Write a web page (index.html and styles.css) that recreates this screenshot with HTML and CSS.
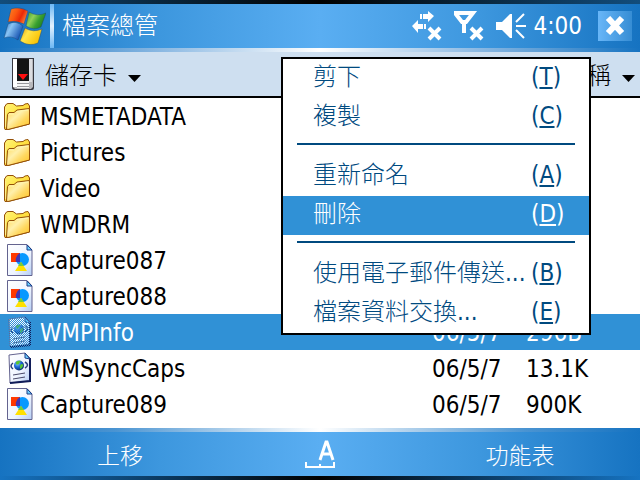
FILE: index.html
```html
<!DOCTYPE html>
<html lang="zh-Hant">
<head>
<meta charset="utf-8">
<title>檔案總管</title>
<link rel="stylesheet" href="styles.css">
</head>
<body>
<svg class="defs" aria-hidden="true">
  <defs>
    <linearGradient id="gold" x1="0" y1="0" x2="1" y2="1"><stop offset="0" stop-color="#fff27c"/><stop offset=".35" stop-color="#ffe84c"/><stop offset="1" stop-color="#ffb818"/></linearGradient>
    <linearGradient id="goldfront" x1="0" y1="0" x2="1" y2="1"><stop offset="0" stop-color="#ffd850"/><stop offset=".4" stop-color="#fff0ac"/><stop offset=".65" stop-color="#ffd860"/><stop offset="1" stop-color="#ffc020"/></linearGradient>
    <linearGradient id="paper" x1="0" y1="0" x2="1" y2="1"><stop offset="0" stop-color="#fff"/><stop offset=".6" stop-color="#eef4ff"/><stop offset="1" stop-color="#b4cdf4"/></linearGradient>
    <radialGradient id="globe" cx=".35" cy=".3" r=".8"><stop offset="0" stop-color="#8cc8ff"/><stop offset=".45" stop-color="#1c68d8"/><stop offset="1" stop-color="#04205c"/></radialGradient>
    <pattern id="dither" width="2" height="2" patternUnits="userSpaceOnUse"><path d="M0 0h1v1h-1zM1 1h1v1h-1z" fill="#3091d6"/></pattern>
    <symbol id="folder" viewBox="0 0 28 28">
      <path d="M1.500 5L3.500 2L5 1.500H10L13.500 4L20 3.500L22 2L25 1.500L26.500 4V22L5 27.500H2L1.500 26Z" fill="url(#gold)" stroke="#945008"/>
      <path d="M4.500 12.500L6 10.500H11L14 8L26.500 6.500V22L5 27.500L3.500 27Z" fill="url(#goldfront)" stroke="#945008"/>
      <path d="M2.500 7V25" stroke="#fff08c"/>
      <path d="M14 9.500L25 8M6 12H11" stroke="#fff6b0"/>
    </symbol>
    <symbol id="picture" viewBox="0 0 26 32">
      <path d="M.5.5H20L25 6V31.500H.5Z" fill="url(#paper)" stroke="#63638f"/>
      <path d="M20 1V6H25Z" fill="#6dd2ff" stroke="#1c3c88"/>
      <circle cx="15.500" cy="15.500" r="6.500" fill="#0898ff"/>
      <rect x="4" y="9" width="9" height="9" fill="#ff3800"/>
      <path d="M10 12C11 10 12 10 13 9V18H9Q8 15 10 12Z" fill="#4036b4"/>
      <path d="M14 18L20 27H8Z" fill="#ffe000"/>
      <path d="M14 18L17 22H11Z" fill="#78cc38"/>
    </symbol>
    <symbol id="webfile" viewBox="0 0 24 32">
      <path d="M1 3L17 1L22 6V29L2 31Z" fill="url(#paper)" stroke="#63638f"/>
      <path d="M22 6V29L2 31" fill="none" stroke="#101c58" stroke-width="2"/>
      <path d="M17 1V6L22 7Z" fill="#6dd2ff" stroke="#1c3c88"/>
      <path d="M5 11Q1 14 5 17M17 10Q22 13 17 16" fill="none" stroke="#283c78" stroke-width="1.500"/>
      <circle cx="11" cy="13.500" r="5" fill="url(#globe)"/>
      <path d="M8 10Q10 8 13 9Q11 11 11 12Q9 13 8 12ZM13 12Q16 12 15 14Q14 17 12 17Q11 14 13 12Z" fill="#58c434"/>
      <path d="M5 23L17 21M5 27L17 25" stroke="#484868" stroke-width="1"/>
    </symbol>
    <symbol id="cross" viewBox="0 0 15 15"><path d="M2 2L13 13M13 2L2 13" stroke="#fff" stroke-width="4"/></symbol>
  </defs>
</svg>
<div class="device">
  <header class="titlebar">
    <button class="start" aria-label="開始">
      <svg width="46" height="44" viewBox="0 4 46 44">
        <defs>
          <linearGradient id="fr" x1="0" y1="0" x2="1" y2=".4"><stop offset="0" stop-color="#f88828"/><stop offset=".45" stop-color="#fc5810"/><stop offset=".75" stop-color="#e82808"/><stop offset="1" stop-color="#f87830"/></linearGradient>
          <linearGradient id="fg" x1="0" y1="0" x2="1" y2=".5"><stop offset="0" stop-color="#309828"/><stop offset=".4" stop-color="#90d058"/><stop offset=".7" stop-color="#38a030"/><stop offset="1" stop-color="#207c20"/></linearGradient>
          <linearGradient id="fb" x1="0" y1="0" x2="1" y2=".5"><stop offset="0" stop-color="#2868b8"/><stop offset=".4" stop-color="#88c4f4"/><stop offset="1" stop-color="#1450b0"/></linearGradient>
          <linearGradient id="fy" x1="0" y1="0" x2="1" y2=".5"><stop offset="0" stop-color="#d89808"/><stop offset=".4" stop-color="#ffe448"/><stop offset="1" stop-color="#f8c000"/></linearGradient>
        </defs>
        <g stroke="#184878" stroke-opacity=".45" stroke-width="1">
          <path d="M11 9Q19 6 28 11L24 24Q16 20 8 22Z" fill="url(#fr)"/>
          <path d="M29 12Q37 17 46 13L41 27Q34 31 26 26Z" fill="url(#fg)"/>
          <path d="M8 24Q16 20 23 26L18 40Q11 35 4 38Z" fill="url(#fb)"/>
          <path d="M25 28Q33 33 42 29L38 43Q29 47 20 41Z" fill="url(#fy)"/>
        </g>
      </svg>
    </button>
    <span class="divider"></span>
    <h1 class="title">檔案總管</h1>
    <div class="status">
      <button aria-label="連線"><svg width="30" height="31" viewBox="0 0 30 31"><path d="M8 3h2v5h-2zM11 3h5V0L22 5L16 11V8H11zM12 13h2v5h-2zM0 15L6 9V13H11V18H6V22Z" fill="#fff"/><use href="#cross" x="15" y="15" width="15" height="15"/></svg></button>
      <button aria-label="訊號"><svg width="30" height="31" viewBox="0 0 30 31"><path d="M1 2H19L12 11H8ZM10 10V22" fill="none" stroke="#fff" stroke-width="4"/><use href="#cross" x="15" y="15" width="15" height="15"/></svg></button>
      <button aria-label="音量"><svg width="30" height="31" viewBox="0 0 30 31"><path d="M0 11H6L14 3H16V27H14L6 19H0Z" fill="#fff"/><path d="M20 11L28 3M20 15H30M20 19L28 27" stroke="#fff" stroke-width="2"/></svg></button>
      <time class="clock">4:00</time>
      <button class="close" aria-label="關閉"><svg width="20" height="20" viewBox="0 0 20 20"><path d="M3 2L17 17M17 2L3 17" stroke="#fff" stroke-width="6"/></svg></button>
    </div>
  </header>

  <nav class="toolbar">
    <button class="picker">
      <svg width="22" height="32" viewBox="0 0 22 32">
        <path d="M0 0H22V30Q22 32 20 32H2Q0 32 0 30Z" fill="#383840"/>
        <path d="M1 1H21V29L19 31H3L1 29Z" fill="#b8b8bc"/>
        <path d="M1 1H5V29H1Z" fill="#fff"/><path d="M17 1H20V24H17Z" fill="#dcdce0"/>
        <path d="M5 1H17V23H5Z" fill="#141414"/><path d="M6 16H16L11 22Z" fill="#ff1010"/>
        <path d="M5 23H17V30H5Z" fill="#f4f4f4"/>
        <path d="M5 25.500H17M5 28.500H17" stroke="#98989c"/>
      </svg>
      <span>儲存卡</span>
      <svg class="arrow" width="13" height="7" viewBox="0 0 13 7"><path d="M0 0H13L6.500 7Z"/></svg>
    </button>
    <button class="sorter">
      <span>名稱</span>
      <svg class="arrow" width="13" height="7" viewBox="0 0 13 7"><path d="M0 0H13L6.500 7Z"/></svg>
    </button>
  </nav>

  <main class="content">
    <table class="files">
      <tbody>
        <tr><td class="icon"><svg width="28" height="28"><use href="#folder"/></svg></td><td>MSMETADATA</td><td class="date"></td><td class="size"></td></tr>
        <tr><td class="icon"><svg width="28" height="28"><use href="#folder"/></svg></td><td>Pictures</td><td></td><td></td></tr>
        <tr><td class="icon"><svg width="28" height="28"><use href="#folder"/></svg></td><td>Video</td><td></td><td></td></tr>
        <tr><td class="icon"><svg width="28" height="28"><use href="#folder"/></svg></td><td>WMDRM</td><td></td><td></td></tr>
        <tr><td class="icon file"><svg width="26" height="32"><use href="#picture"/></svg></td><td>Capture087</td><td></td><td></td></tr>
        <tr><td class="icon file"><svg width="26" height="32"><use href="#picture"/></svg></td><td>Capture088</td><td></td><td></td></tr>
        <tr class="selected"><td class="icon file"><svg width="26" height="32"><use href="#webfile" x="1" width="24" height="32"/><path d="M2 0H25V32H2Z" fill="url(#dither)"/></svg></td><td>WMPInfo</td><td>06/5/7</td><td>296B</td></tr>
        <tr><td class="icon file"><svg width="26" height="32"><use href="#webfile" x="1" width="24" height="32"/></svg></td><td>WMSyncCaps</td><td>06/5/7</td><td>13.1K</td></tr>
        <tr><td class="icon file"><svg width="26" height="32"><use href="#picture"/></svg></td><td>Capture089</td><td>06/5/7</td><td>900K</td></tr>
      </tbody>
    </table>
  </main>

  <div class="menu" role="menu">
    <button role="menuitem"><span>剪下</span><span class="key">(<u>T</u>)</span></button>
    <button role="menuitem"><span>複製</span><span class="key">(<u>C</u>)</span></button>
    <hr>
    <button role="menuitem"><span>重新命名</span><span class="key">(<u>A</u>)</span></button>
    <button role="menuitem" class="active"><span>刪除</span><span class="key">(<u>D</u>)</span></button>
    <hr>
    <button role="menuitem"><span>使用電子郵件傳送...</span><span class="key">(<u>B</u>)</span></button>
    <button role="menuitem"><span>檔案資料交換...</span><span class="key">(<u>E</u>)</span></button>
  </div>

  <footer class="softkeys">
    <button>上移</button>
    <button class="sip" aria-label="輸入面板"><svg width="30" height="29" viewBox="0 0 30 29"><path d="M15 20L21 2H22L28 20M17 14H26" fill="none" stroke="#fff" stroke-width="3"/><path d="M1 22V27H29V22M15 24V27" fill="none" stroke="#fff" stroke-width="2"/></svg></button>
    <button>功能表</button>
  </footer>
</div>
</body>
</html>
```
FILE: styles.css
```css
* { box-sizing: border-box; }

body {
  margin: 0;
  font: 24px/36px "DejaVu Sans Condensed", "Noto Sans CJK TC", sans-serif;
  font-weight: 300;
  color: #000;
  background: #fff;
}

button {
  display: flex;
  align-items: center;
  margin: 0;
  padding: 0;
  border: 0;
  background: none;
  color: inherit;
  font: inherit;
  white-space: nowrap;
}

svg { display: block; flex: none; }
.defs { position: absolute; width: 0; height: 0; }

.device {
  position: relative;
  display: flex;
  flex-direction: column;
  min-height: 100vh;
}

.titlebar,
.softkeys {
  color: #fff;
  border-style: solid;
  border-width: 4px 0;
  border-color: transparent;
}

.titlebar {
  display: flex;
  align-items: center;
  height: 52px;
  background:
    linear-gradient(90deg, #1673c1, #8ab8e2 25%, #fff 50%, #8ab8e2 75%, #1673c1) bottom / 100% 4px no-repeat border-box,
    linear-gradient(90deg, #124d7c, #000 50%, #124d7c) top / 100% 4px no-repeat border-box,
    linear-gradient(90deg, #1673c1, #3d97de 25%, #5aaef2 50%, #3d97de 75%, #1673c1) border-box;
}

.divider {
  width: 4px;
  height: 44px;
  margin: 0 8px 0 4px;
  background: linear-gradient(#6db8f4, #e4f2fe 50%, #6db8f4);
}

.title { margin: 0; font: inherit; }
.status { display: flex; align-items: center; gap: 12px; margin-left: auto; padding-right: 8px; }
.clock { margin-left: -4px; }

.close {
  justify-content: center;
  width: 34px;
  height: 30px;
  margin-left: 4px;
  background: linear-gradient(90deg, #68b6f8, #368dd4);
}

.toolbar {
  display: flex;
  justify-content: space-between;
  height: 46px;
  padding: 0 5px 0 12px;
  border-bottom: 2px solid #000;
  background: #cedff0;
}

.toolbar button { gap: 11px; }
.toolbar span { padding-top: 4px; }
.arrow { margin-top: 8px; }

.content { flex: 1; }

.files {
  width: 100%;
  table-layout: fixed;
  border-collapse: collapse;
}

.files td { height: 36px; padding: 2px 0 0; line-height: 34px; white-space: nowrap; }
.files .icon { width: 40px; padding: 0 0 0 3px; }
.files .file { padding-left: 7px; }
.files .date { width: 94px; }
.files .size { width: 114px; }
.selected { color: #fff; background: #3091d6; }

.menu {
  position: absolute;
  top: 57px;
  right: 49px;
  width: 310px;
  border: 2px solid #000;
  background: #fff;
  color: #004a7f;
}

.menu button { width: 100%; height: 39px; padding: 0 0 3px 30px; }
.menu .key { width: 58px; margin-left: auto; text-align: left; }
.menu u { text-decoration-thickness: 2px; text-underline-offset: 2px; }
.menu .active { color: #fff; background: #3091d6; }

.menu hr {
  height: 2px;
  margin: 6px 14px 12px;
  border: 0;
  background: #004a7f;
}

.softkeys {
  display: grid;
  grid-template-columns: 1fr 160px 1fr;
  height: 52px;
  font-size: 23px;
  background:
    linear-gradient(90deg, #1673c1, #4a94d2 18%, #fff 50%, #4a94d2 82%, #1673c1) top / 100% 4px no-repeat border-box,
    linear-gradient(90deg, #1673c1, #000 50%, #1673c1) bottom / 100% 4px no-repeat border-box,
    linear-gradient(90deg, #1673c1, #3d97de 25%, #5aaef2 50%, #3d97de 75%, #1673c1) border-box;
}

.softkeys button { justify-content: center; padding-top: 4px; }
.softkeys .sip { padding-top: 0; }
```
